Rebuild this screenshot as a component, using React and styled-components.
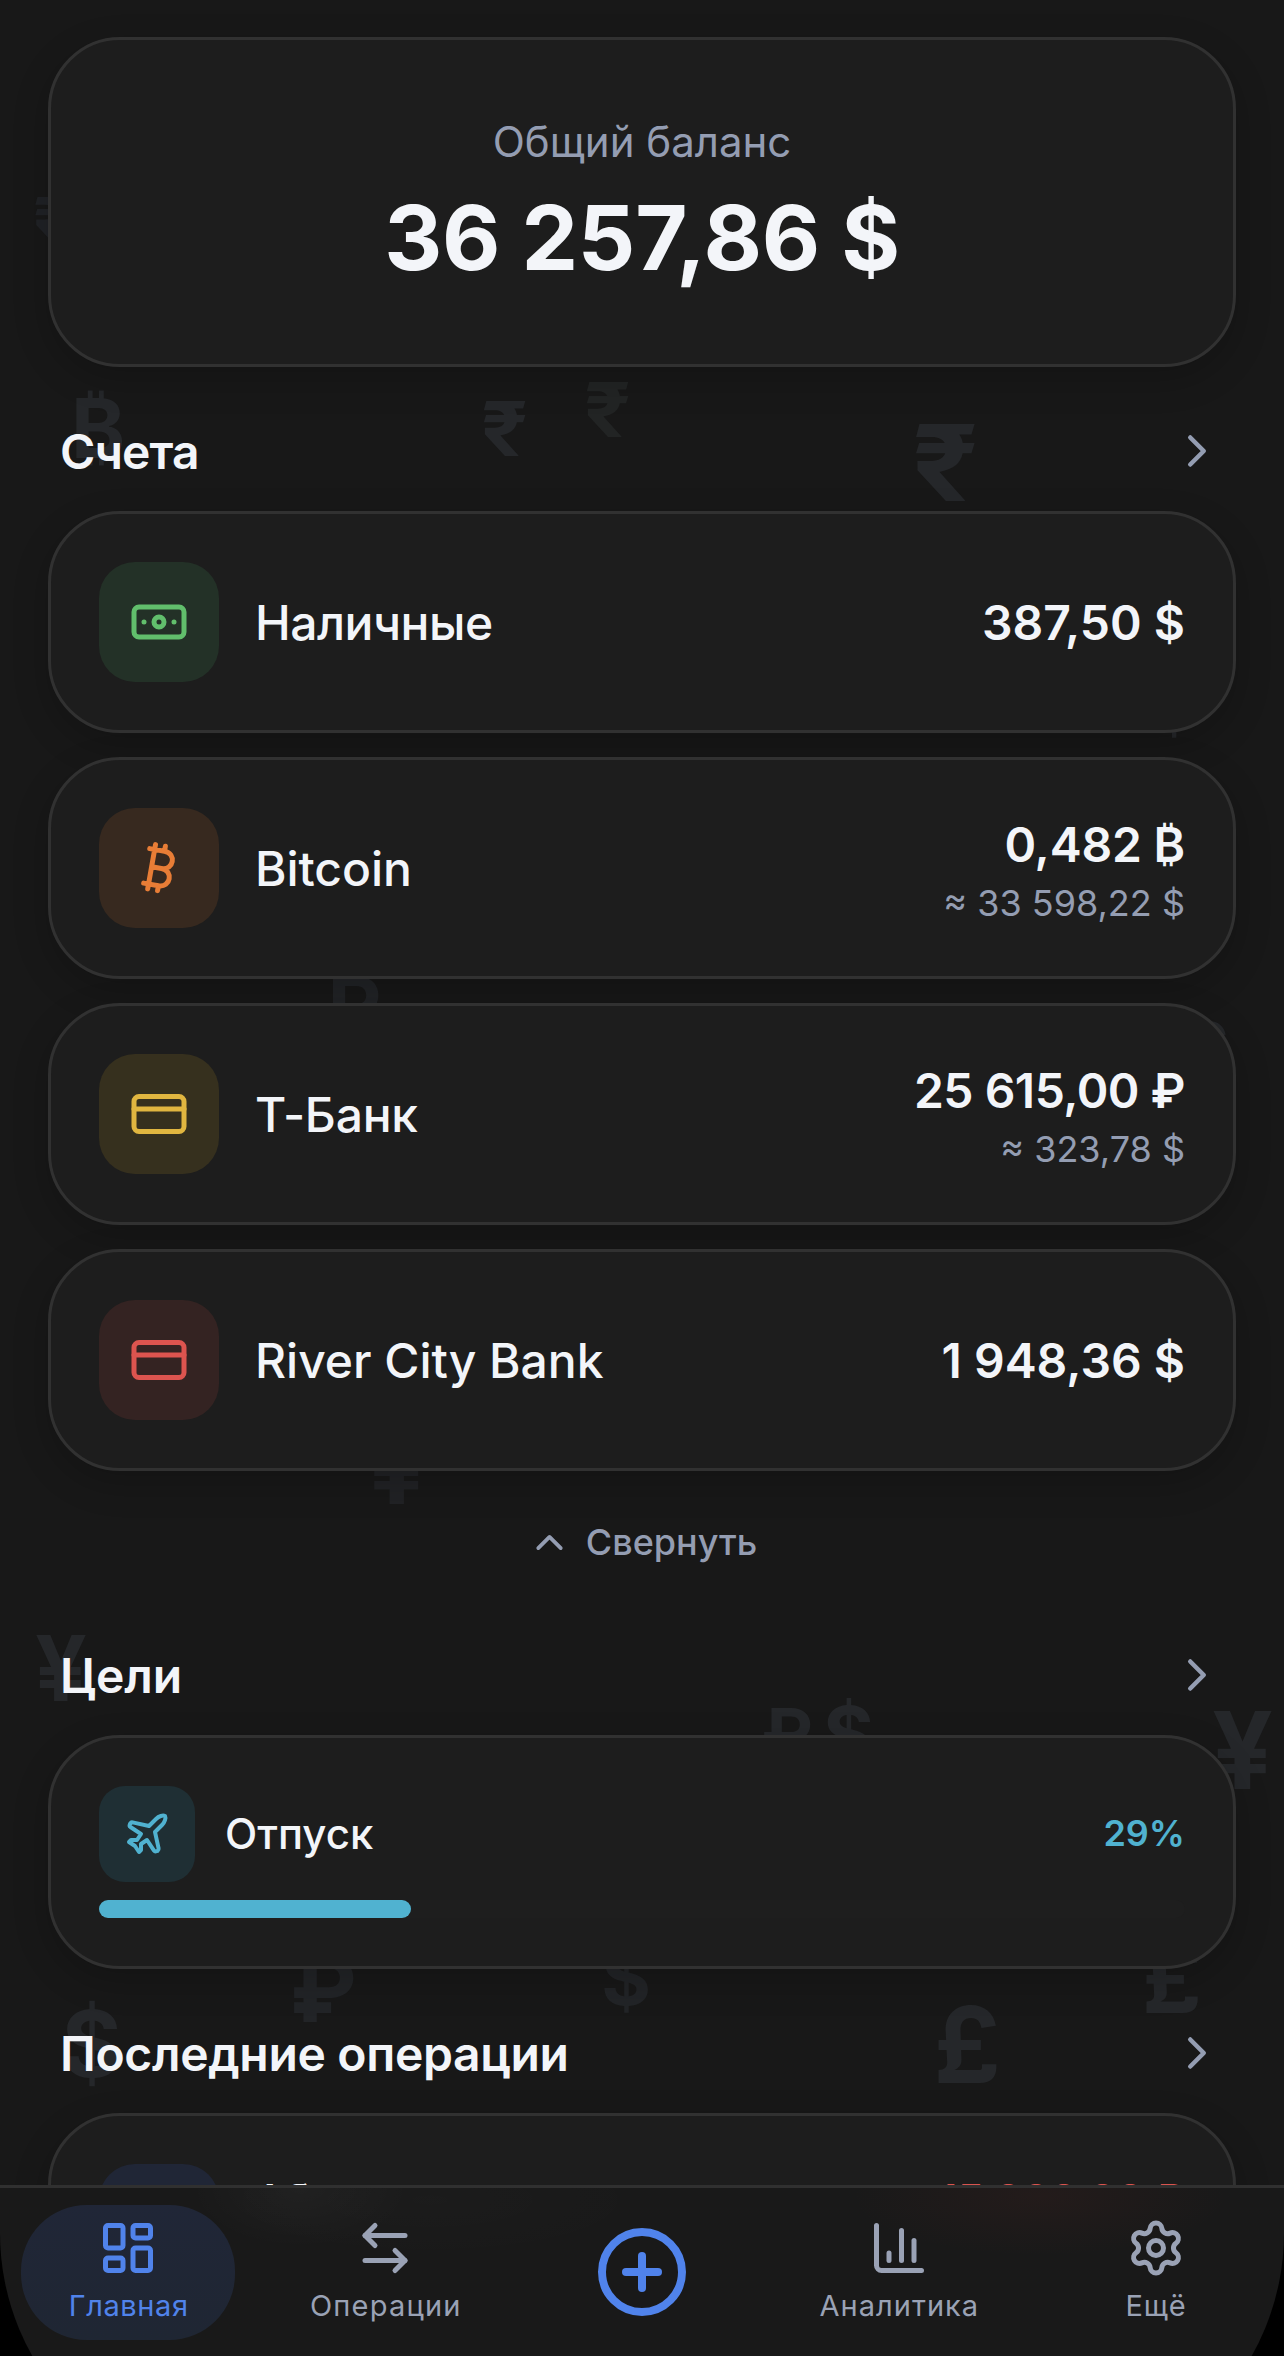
import React from 'react';
import styled, { createGlobalStyle } from 'styled-components';
import {
  Banknote, Bitcoin, CreditCard, Plane, ChevronRight, ChevronUp,
  LayoutDashboard, ArrowLeftRight, ChartColumn, Settings, CirclePlus,
} from 'lucide-react';

const Global = createGlobalStyle`
  * { box-sizing: border-box; }
  html, body { margin: 0; background: #000; }
  body { font-family: Inter, "Noto Sans", sans-serif; color: #f3f5f9; }
`;

const Screen = styled.main`
  display: flex;
  flex-direction: column;
  width: 1284px;
  height: 2356px;
  overflow: hidden;
  background: #000;
`;

const Page = styled.div`
  position: relative;
  flex: none;
  height: 2185px;
  overflow: hidden;
  background: #181818;
`;

const Mark = styled.span`
  position: absolute;
  left: ${p => p.$x}px;
  top: ${p => p.$y}px;
  font-size: ${p => p.$size}px;
  line-height: 1;
  font-weight: 700;
  color: ${p => p.$tint || '#25272a'};
  transform: scaleX(${p => p.$stretch});
  transform-origin: left;
`;

const Content = styled.div`
  position: relative;
  display: flex;
  flex-direction: column;
  padding: 37px 48px 0;
`;

const Card = styled.section`
  flex: none;
  height: ${p => p.$h}px;
  padding: 48px;
  border: 3px solid #313131;
  border-radius: 72px;
  background: #1d1d1d;
  box-shadow: 0 12px 36px rgba(0, 0, 0, 0.2);
`;

const BalanceCard = styled(Card)`
  display: flex;
  flex-direction: column;
  align-items: center;
  padding-top: 72px;
`;

const BalanceLabel = styled.div`
  font-size: 42px;
  line-height: 60px;
  color: #949db2;
`;

const BalanceValue = styled.div`
  margin-top: 12px;
  font-size: 90px;
  line-height: 108px;
  font-weight: 700;
  letter-spacing: -0.2px;
`;

const SectionHead = styled.header`
  display: flex;
  align-items: center;
  justify-content: space-between;
  flex: none;
  height: 144px;
  padding: 24px 12px 0;
  svg { color: #949db2; }
`;

const Title = styled.h2`
  margin: 0;
  padding-top: 2px;
  font-size: 48px;
  line-height: 60px;
  font-weight: 600;
  letter-spacing: ${p => p.$track}px;
`;

const List = styled.div`
  display: flex;
  flex-direction: column;
  gap: 24px;
`;

const AccountCard = styled(Card)`
  display: flex;
  align-items: center;
`;

const Tile = styled.div`
  display: grid;
  place-items: center;
  flex: none;
  width: ${p => p.$size}px;
  height: ${p => p.$size}px;
  border-radius: ${p => p.$r}px;
  background: ${p => p.$bg};
  color: ${p => p.$fg};
`;

const AccountName = styled.div`
  flex: 1;
  padding-top: 2px;
  margin-left: 36px;
  font-size: 48px;
  line-height: 60px;
  font-weight: 500;
  letter-spacing: ${p => p.$track}px;
`;

const Amounts = styled.div`
  padding-top: ${p => (p.$single ? 2 : 0)}px;
  text-align: right;
  white-space: nowrap;
`;

const Amount = styled.div`
  font-size: 48px;
  line-height: 70px;
  font-weight: 600;
  letter-spacing: ${p => p.$track || 0}px;
`;

const Approx = styled.div`
  font-size: 36px;
  line-height: 47px;
  color: #949db2;
`;

const Collapse = styled.button`
  display: flex;
  align-items: center;
  justify-content: center;
  gap: 14px;
  flex: none;
  height: 120px;
  padding: 22px 0 0;
  border: 0;
  background: none;
  color: #949db2;
  font: 500 36px/48px Inter, sans-serif;
`;

const GoalRow = styled.div`
  display: flex;
  align-items: center;
`;

const GoalName = styled.div`
  flex: 1;
  margin-left: 30px;
  font-size: 42px;
  line-height: 60px;
  font-weight: 500;
`;

const Percent = styled.div`
  padding-bottom: 2px;
  font-size: 36px;
  line-height: 48px;
  font-weight: 600;
  color: #50b2d0;
`;

const Track = styled.div`
  height: 18px;
  margin-top: 18px;
  border-radius: 9px;
  background: #1e1e1e;
`;

const Fill = styled.div`
  width: ${p => p.$pct}%;
  height: 18px;
  border-radius: 9px;
  background: #50b2d0;
`;

const OperationCard = styled(Card)`
  display: flex;
  align-items: flex-start;
`;

const OperationText = styled.div`
  flex: ${p => (p.$grow ? 1 : 'none')};
  margin-top: 6px;
  margin-left: ${p => (p.$grow ? 36 : 0)}px;
  font-size: 42px;
  line-height: 60px;
  font-weight: ${p => (p.$grow ? 500 : 600)};
  color: ${p => p.$color || 'inherit'};
`;

const Nav = styled.nav`
  display: flex;
  flex: none;
  height: 171px;
  padding-top: 17px;
  border-top: 3px solid #303030;
  background:
    radial-gradient(ellipse 110px 60px at 300px 0, rgba(255, 255, 255, 0.03), transparent),
    radial-gradient(ellipse 230px 60px at 430px 12px, rgba(255, 255, 255, 0.012), transparent),
    radial-gradient(ellipse 190px 60px at 1040px 8px, rgba(200, 60, 50, 0.06), transparent),
    #191919;
  clip-path: inset(0 0 -127px 0 round 0 0 250px 250px);
`;

const NavSlot = styled.div`
  display: flex;
  justify-content: center;
  flex: 1 1 0;
`;

const NavButton = styled.a`
  display: flex;
  flex-direction: column;
  align-items: center;
  gap: 10px;
  width: 214px;
  height: 135px;
  padding-top: 13px;
  border-radius: 66px;
  background: ${p => (p.$active ? 'linear-gradient(#202637, #1f2633)' : 'none')};
  color: ${p => (p.$active ? '#5083eb' : '#9aa2b5')};
`;

const NavLabel = styled.span`
  font-size: 29px;
  line-height: 36px;
  letter-spacing: ${p => p.$track}px;
  margin-right: -${p => p.$track}px;
  white-space: nowrap;
`;

const AddButton = styled.a`
  display: flex;
  align-items: center;
  height: 134px;
  color: #5083eb;
`;

// ink offset of each glyph from its origin, in em
const bearing = { '₹': 0.05, '₿': 0.06, '₽': 0.1, '$': 0.05, '£': 0.04, '¥': 0.01 };

// [glyph, left edge, baseline, font size, tint]
const marks = [
  ['₹', 36, 243, 63, '#202226'],
  ['₿', 76, 459, 82],
  ['₹', 485, 456, 75],
  ['₹', 588, 437, 75, '#222424'],
  ['₹', 917, 502, 106],
  ['$', 1153, 730, 75],
  ['£', 1187, 1073, 70],
  ['₽', 329, 1037, 82, '#222427'],
  ['¥', 370, 1505, 98, '#212225'],
  ['¥', 36, 1702, 91],
  ['₽', 768, 1759, 70],
  ['$', 827, 1763, 78],
  ['¥', 1213, 1789, 107],
  ['₽', 299, 2023, 90, '#222427'],
  ['$', 605, 2005, 76, '#222427'],
  ['£', 1146, 2013, 93],
  ['$', 66, 2077, 92],
  ['£', 938, 2083, 105],
];

const accounts = [
  { name: 'Наличные', track: -0.5, icon: Banknote, bg: '#233127', fg: '#61bf6c', amount: '387,50 $' },
  { name: 'Bitcoin', track: -0.05, icon: Bitcoin, bg: '#37291f', fg: '#e87d36', amount: '0,482 ₿', amountTrack: -0.2, approx: '≈ 33 598,22 $' },
  { name: 'Т-Банк', track: -0.25, icon: CreditCard, bg: '#36301e', fg: '#e1b640', amount: '25 615,00 ₽', amountTrack: -0.5, approx: '≈ 323,78 $' },
  { name: 'River City Bank', track: -0.03, icon: CreditCard, bg: '#342322', fg: '#dc544f', amount: '1 948,36 $' },
];

function Heading({ children, track }) {
  return (
    <SectionHead>
      <Title $track={track}>{children}</Title>
      <ChevronRight size={54} />
    </SectionHead>
  );
}

function NavItem({ icon: Icon, label, active, track = 1.2 }) {
  return (
    <NavSlot>
      <NavButton $active={active}>
        <Icon size={60} />
        <NavLabel $track={track}>{label}</NavLabel>
      </NavButton>
    </NavSlot>
  );
}

export default function App() {
  return (
    <>
      <Global />
      <Screen>
        <Page>
          {marks.map(([glyph, x, base, size, tint], i) => (
            <Mark
              key={i}
              aria-hidden="true"
              $x={x - bearing[glyph] * size}
              $y={base - 0.864 * size}
              $size={size}
              $tint={tint}
              $stretch={glyph === '₹' ? 1.1 : 1}
            >
              {glyph}
            </Mark>
          ))}
          <Content>
            <BalanceCard $h={330}>
              <BalanceLabel>Общий баланс</BalanceLabel>
              <BalanceValue>36 257,86 $</BalanceValue>
            </BalanceCard>

            <Heading track={-0.9}>Счета</Heading>
            <List>
              {accounts.map(({ name, track, icon: Icon, bg, fg, amount, amountTrack, approx }) => (
                <AccountCard key={name} $h={222}>
                  <Tile $size={120} $r={36} $bg={bg} $fg={fg}><Icon size={60} /></Tile>
                  <AccountName $track={track}>{name}</AccountName>
                  <Amounts $single={!approx}>
                    <Amount $track={amountTrack}>{amount}</Amount>
                    {approx && <Approx>{approx}</Approx>}
                  </Amounts>
                </AccountCard>
              ))}
            </List>
            <Collapse><ChevronUp size={45} />Свернуть</Collapse>

            <Heading track={-0.05}>Цели</Heading>
            <Card $h={234}>
              <GoalRow>
                <Tile $size={96} $r={26} $bg="#1f2f34" $fg="#50b2d0"><Plane size={48} /></Tile>
                <GoalName>Отпуск</GoalName>
                <Percent>29%</Percent>
              </GoalRow>
              <Track><Fill $pct={28.75} /></Track>
            </Card>

            <Heading track={-0.33}>Последние операции</Heading>
            <OperationCard $h={222}>
              <Tile $size={120} $r={36} $bg="#202636" />
              <OperationText $grow>Абонемент</OperationText>
              <OperationText $color="#d9544f">−15 000,00 ₽</OperationText>
            </OperationCard>
          </Content>
        </Page>

        <Nav>
          <NavItem icon={LayoutDashboard} label="Главная" active track={0.6} />
          <NavItem icon={ArrowLeftRight} label="Операции" />
          <NavSlot><AddButton><CirclePlus size={96} /></AddButton></NavSlot>
          <NavItem icon={ChartColumn} label="Аналитика" track={1.05} />
          <NavItem icon={Settings} label="Ещё" track={0.9} />
        </Nav>
      </Screen>
    </>
  );
}
